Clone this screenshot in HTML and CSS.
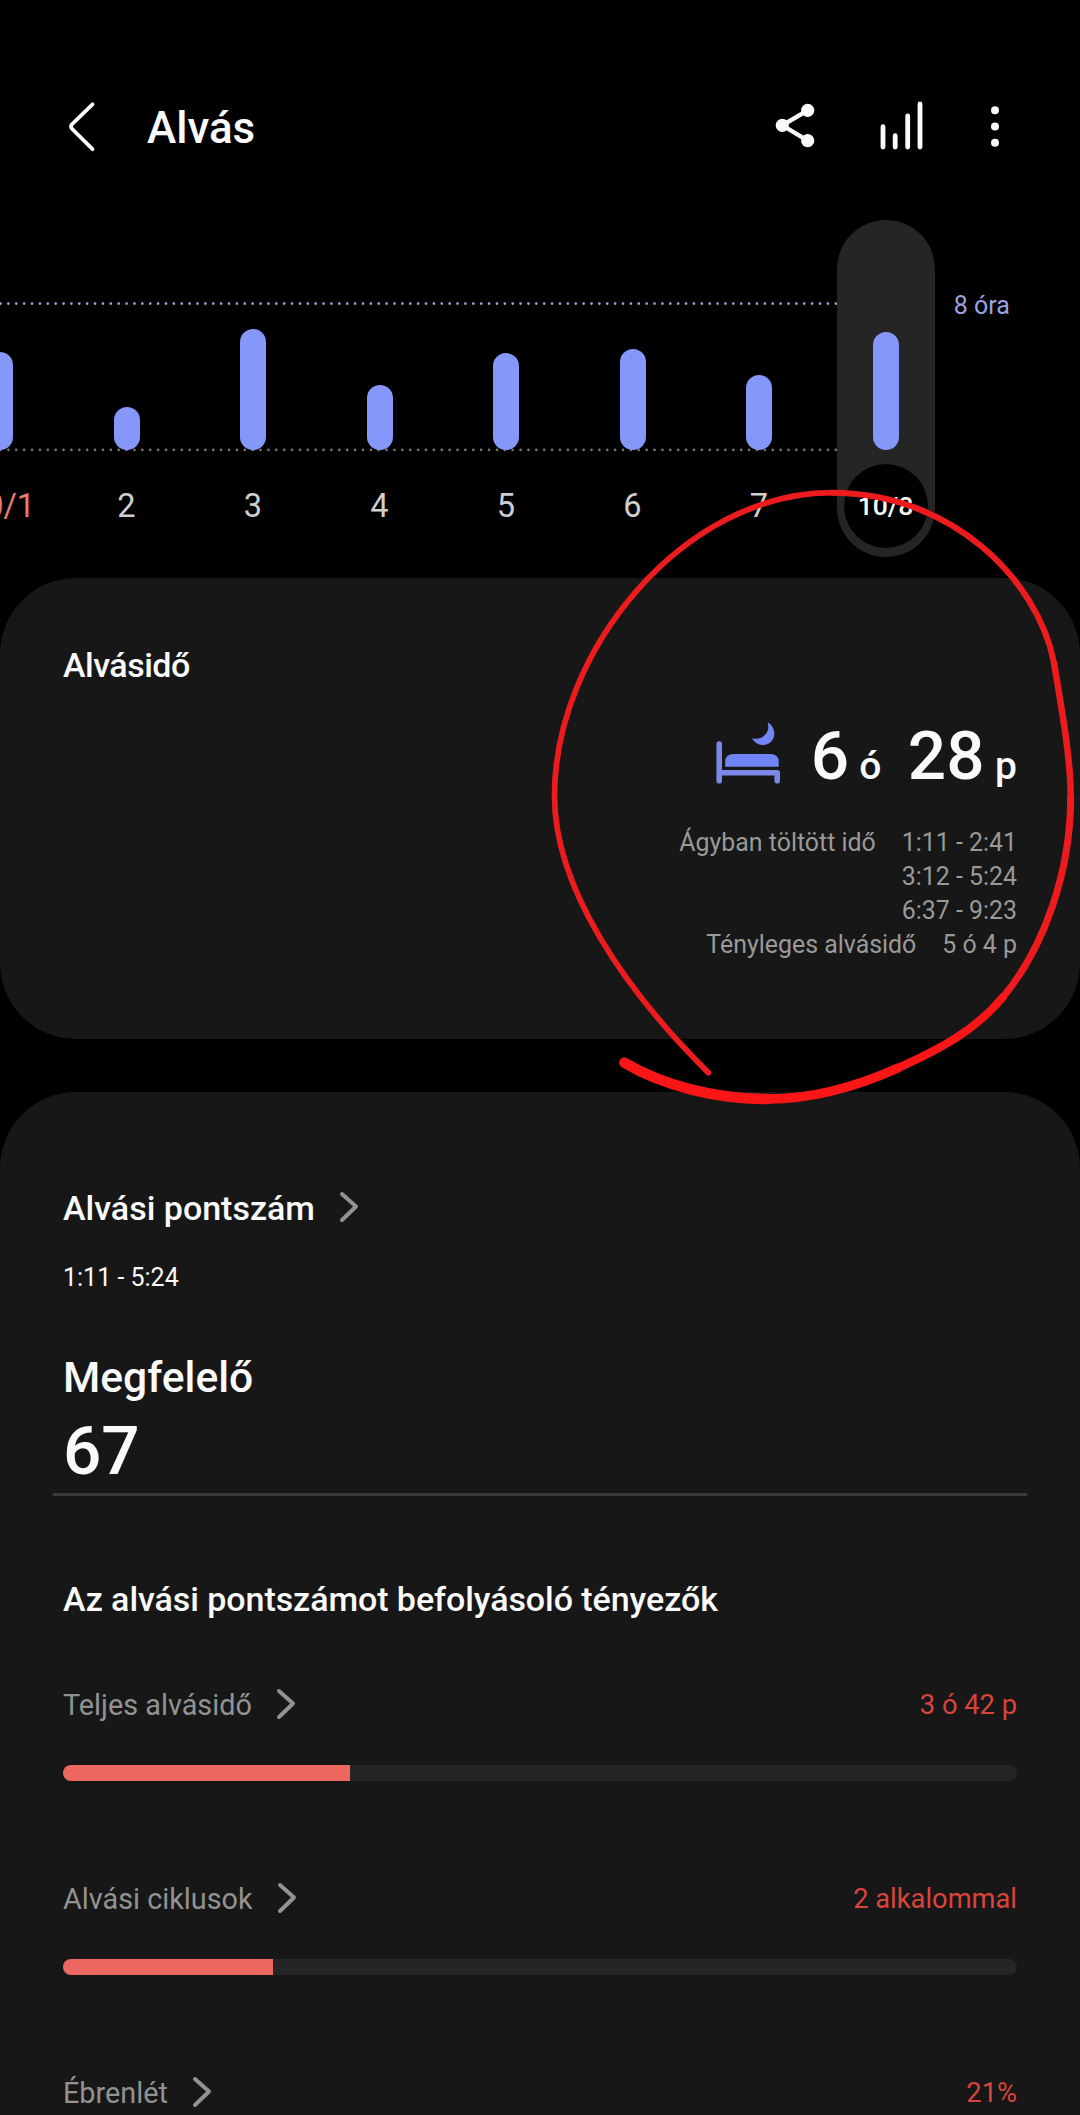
FILE: index.html
```html
<!DOCTYPE html>
<html lang="hu">
<head>
<meta charset="utf-8">
<title>Alvás</title>
<link rel="stylesheet" href="styles.css">
</head>
<body>
<div class="screen">
  <header class="header">
    <svg class="back" width="32" height="56" viewBox="0 0 32 56"><path d="M27.500 6.300 6.800 26.500Q5.300 28.500 6.800 30.500L27.500 51.200"/></svg>
    <h1 class="title">Alvás</h1>
    <div class="actions">
      <svg class="share" width="42" height="52" viewBox="0 0 42 52"><path d="M33.700 10.300 8.300 25.300 33.700 40.700"/><circle cx="8.300" cy="25.300" r="6.600"/><circle cx="33.700" cy="10.300" r="6.600"/><circle cx="33.700" cy="40.700" r="6.600"/></svg>
      <svg class="stats" width="46" height="52" viewBox="0 0 46 52"><path d="M5 26.700V47M17.200 35.700V47M29.700 16V47M42 4V47"/></svg>
      <svg class="more" width="12" height="52" viewBox="0 0 12 52"><circle cx="6" cy="10.300" r="4"/><circle cx="6" cy="26.400" r="4"/><circle cx="6" cy="42.700" r="4"/></svg>
    </div>
  </header>

  <section class="chart">
    <svg class="guides" width="837" height="160" viewBox="0 0 837 160"><path class="goal" d="M.500 3.600H837"/><path class="base" d="M.500 149.900H837"/></svg>
    <div class="days">
      <div class="day"><div class="plot"><i class="bar" style="height:98px"></i></div><span class="date holiday">10/1</span></div>
      <div class="day"><div class="plot"><i class="bar" style="height:43px"></i></div><span class="date">2</span></div>
      <div class="day"><div class="plot"><i class="bar" style="height:121.500px"></i></div><span class="date">3</span></div>
      <div class="day"><div class="plot"><i class="bar" style="height:65.500px"></i></div><span class="date">4</span></div>
      <div class="day"><div class="plot"><i class="bar" style="height:97px"></i></div><span class="date">5</span></div>
      <div class="day"><div class="plot"><i class="bar" style="height:101px"></i></div><span class="date">6</span></div>
      <div class="day"><div class="plot"><i class="bar" style="height:75.500px"></i></div><span class="date">7</span></div>
      <div class="day selected"><div class="plot"><i class="bar" style="height:118.500px"></i></div><span class="date">10/8</span></div>
    </div>
    <span class="goal-label">8 óra</span>
  </section>

  <section class="card time-card">
    <h2 class="heading time-title">Alvásidő</h2>
    <div class="total">
      <svg class="bed" width="68" height="66" viewBox="0 0 68 66"><path class="frame" d="M6.200 23V59.700M6.200 51.800H64.200V59.700"/><path d="M12.200 45.700V41Q12.200 33 21 33H57Q65.700 33 65.700 41V45.700Z"/><path d="M54.500 1.200C66 8 62 24 50 24Q43 24 38.800 17.200C50 20 58 11 54.500 1.200Z"/></svg>
      <span class="number">6</span><span class="unit hours">ó</span><span class="number">28</span><span class="unit minutes">p</span>
    </div>
    <dl class="details">
      <div class="detail"><dt>Ágyban töltött idő</dt><dd>1:11 - 2:41<br>3:12 - 5:24<br>6:37 - 9:23</dd></div>
      <div class="detail"><dt>Tényleges alvásidő</dt><dd>5 ó 4 p</dd></div>
    </dl>
  </section>

  <section class="card score-card">
    <h2 class="heading">Alvási pontszám<svg class="chevron" width="24" height="36" viewBox="0 0 24 36"><path d="M5 5 19 17.500 5 31"/></svg></h2>
    <p class="period">1:11 - 5:24</p>
    <p class="rating">Megfelelő</p>
    <p class="score">67</p>
    <hr class="divider">
    <h2 class="heading factors-title">Az alvási pontszámot befolyásoló tényezők</h2>
    <div class="factors">
      <div class="factor">
        <div class="factor-row"><span>Teljes alvásidő</span><svg class="chevron" width="24" height="36" viewBox="0 0 24 36"><path d="M5 5 19 17.500 5 31"/></svg><span class="value">3 ó 42 p</span></div>
        <div class="track"><div class="fill" style="width:287px"></div></div>
      </div>
      <div class="factor">
        <div class="factor-row"><span>Alvási ciklusok</span><svg class="chevron" width="24" height="36" viewBox="0 0 24 36"><path d="M5 5 19 17.500 5 31"/></svg><span class="value">2 alkalommal</span></div>
        <div class="track"><div class="fill" style="width:210px"></div></div>
      </div>
      <div class="factor">
        <div class="factor-row"><span>Ébrenlét</span><svg class="chevron" width="24" height="36" viewBox="0 0 24 36"><path d="M5 5 19 17.500 5 31"/></svg><span class="value">21%</span></div>
      </div>
    </div>
  </section>

  <svg class="marker" width="1080" height="2115" viewBox="0 0 1080 2115">
    <path stroke-width="5.700" d="M832 492.700C684 492.700 554.500 650 554.500 796C554.500 888 625 990 708.400 1072.700"/>
    <path stroke-width="6" d="M1054 663C1038 580 952 492.700 832 492.700"/>
    <path stroke-width="6.500" d="M1070.700 797C1070.700 757 1061 705 1054 663"/>
    <path stroke-width="7" d="M1003 997C1044 948 1070.700 872 1070.700 797"/>
    <path stroke-width="8" class="wet" d="M898 1068C938 1050 975 1031 1003 997"/>
    <path stroke-width="9.300" class="wet" d="M768 1099C815 1099 858 1086 898 1068"/>
    <path stroke-width="10.500" class="wet" d="M624.400 1062.700C664 1086 716 1099 768 1099"/>
  </svg>
</div>
</body>
</html>
```
FILE: styles.css
```css
* { box-sizing: border-box; margin: 0; padding: 0; }

body {
  background: #000;
  color: #fafafa;
  font-family: Roboto, "Liberation Sans", sans-serif;
}

svg { display: block; flex: none; }

.screen {
  position: relative;
  width: 1080px;
  height: 2115px;
  overflow: hidden;
}

/* Header */
.header {
  display: flex;
  align-items: center;
  height: 176px;
  padding: 76px 79.500px 0 65px;
}
.back { fill: none; stroke: #fafafa; stroke-width: 3.8; stroke-linecap: round; }
.title { margin-left: 50px; padding-top: 4px; font-size: 44px; font-weight: 500; line-height: 56px; }
.actions { display: flex; align-items: center; margin-left: auto; }
.share, .more { fill: #fafafa; }
.share path { fill: none; stroke: #fafafa; stroke-width: 4.4; }
.stats { margin-left: 62px; fill: none; stroke: #fafafa; stroke-width: 4.800; stroke-linecap: round; }
.more { margin-left: 65px; }

/* Daily chart */
.chart {
  position: relative;
  display: flex;
  height: 402px;
  padding-top: 43.700px;
}
.guides { position: absolute; left: 0; top: 124px; fill: none; stroke-width: 2.700; stroke-linecap: round; stroke-dasharray: 0 7.880; }
.goal { stroke: #a3a9e0; }
.base { stroke: #77726b; }
.days { position: relative; display: flex; flex: none; margin-left: -63.250px; }
.day {
  display: flex;
  flex-direction: column;
  align-items: center;
  width: 98px;
  height: 337.500px;
  margin: 0 14.250px;
  border-radius: 49px;
}
.plot { display: flex; align-items: flex-end; height: 230.500px; }
.bar { width: 26px; border-radius: 13px; background: #8598fa; }
.date {
  width: 84px;
  height: 84px;
  margin-top: 13.500px;
  border-radius: 42px;
  color: #cfcfcf;
  font-size: 32.500px;
  line-height: 84px;
  text-align: center;
}
.holiday { padding-left: 2px; color: #e67b73; }
.selected { background: #252525; }
.selected .date { background: #000; color: #fafafa; font-size: 26.500px; font-weight: 500; }
.goal-label { margin-left: 5px; padding-top: 69px; color: #9ba2e2; font-size: 25px; line-height: 34px; }

/* Cards */
.card { padding: 0 63px; border-radius: 76px; background: #171717; }
.heading { display: flex; align-items: center; font-size: 34px; font-weight: 500; line-height: 44px; }
.chevron { fill: none; stroke: #929292; stroke-width: 4; stroke-linecap: round; stroke-linejoin: round; }

.time-card { height: 460.700px; padding-top: 65.400px; }
.time-title { letter-spacing: -.5px; }
.total {
  display: flex;
  justify-content: flex-end;
  align-items: baseline;
  height: 80px;
  margin-top: 28.600px;
  line-height: 80px;
  font-weight: 500;
}
.bed { align-self: flex-start; margin: 5px 30px 0 0; fill: #7186f5; }
.frame { fill: none; stroke: #7b88e8; stroke-width: 5.600; stroke-linecap: round; stroke-linejoin: round; }
.number { font-size: 67.500px; }
.unit { font-size: 39px; }
.hours { margin: 0 26.500px 0 10px; }
.minutes { margin-left: 10.500px; }
.details { margin-top: 30.500px; color: #999; font-size: 24.900px; line-height: 34px; }
.detail { display: flex; justify-content: flex-end; gap: 26px; text-align: right; }

.score-card { height: 1100px; margin-top: 53.300px; padding-top: 94.400px; }
.heading .chevron { margin: -2px 0 0 22px; }
.period { margin-top: 30.700px; font-size: 25px; line-height: 34px; }
.rating { margin-top: 54.500px; font-size: 42.600px; font-weight: 500; line-height: 54px; }
.score { margin-top: 7.600px; font-size: 67.500px; font-weight: 500; line-height: 80px; }
.divider { height: 3px; margin: 1.800px -10px 0; border: 0; background: #3a3a3a; }
.factors-title { margin-top: 81.400px; letter-spacing: -.060px; }
.factors { display: flex; flex-direction: column; gap: 98px; margin-top: 63.600px; }
.factor-row { display: flex; align-items: center; height: 40px; color: #929292; font-size: 28.800px; line-height: 40px; }
.factor-row .chevron { margin: -2px 0 0 22px; }
.value { margin-left: auto; color: #d9443b; font-size: 27.300px; }
.track { height: 16px; margin-top: 40px; border-radius: 8px; background: #252525; overflow: hidden; }
.fill { height: 16px; background: #ec6760; }

/* Freehand pen mark over the page */
.marker { position: absolute; left: 0; top: 0; fill: none; stroke: #ec1c1e; stroke-linecap: round; pointer-events: none; }
.wet { stroke: #fa1617; }
```
